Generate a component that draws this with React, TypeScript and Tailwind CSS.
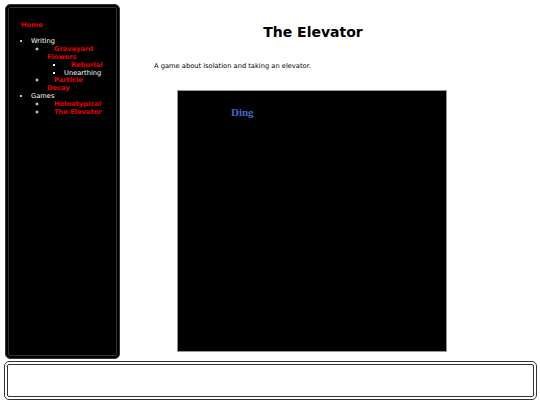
import React from 'react';

const writing = [
  { label: 'Graveyard Flowers', link: true, children: [
    { label: 'Reburial', link: true },
    { label: 'Unearthing', link: false },
  ] },
  { label: 'Particle Decay', link: true },
];

const games = [
  { label: 'Holoatypical', link: true },
  { label: 'The Elevator', link: true },
];

function Item({ label, link }: { label: string; link: boolean }) {
  if (!link) return <span className="text-white">{label}</span>;
  return <a className="pl-[7px] font-bold text-[#e00000]">{label}</a>;
}

export default function App() {
  return (
    <div className="w-[540px] h-[405px] bg-white p-[4px] font-['DejaVu_Sans',sans-serif] overflow-hidden">
      <div className="flex h-[355px]">
        {/* Sidebar */}
        <nav className="w-[115px] h-[355px] ml-[1px] bg-black border-[4px] border-double border-[#333] rounded-[5px] px-[12px] pt-[14px] text-[6.7px] leading-[7.9px] text-white">
          <a className="font-bold text-[#e00000]">Home</a>
          <ul className="mt-[8px] pl-[10px] [list-style-type:disc]">
            <li>
              Writing
              <ul className="pl-[16px] [list-style-type:circle]">
                {writing.map(w => (
                  <li key={w.label}>
                    <Item label={w.label} link={w.link} />
                    {w.children && (
                      <ul className="pl-[17px] [list-style-type:square]">
                        {w.children.map(c => (
                          <li key={c.label}><Item label={c.label} link={c.link} /></li>
                        ))}
                      </ul>
                    )}
                  </li>
                ))}
              </ul>
            </li>
            <li>
              Games
              <ul className="pl-[16px] [list-style-type:circle]">
                {games.map(g => (
                  <li key={g.label}><Item label={g.label} link={g.link} /></li>
                ))}
              </ul>
            </li>
          </ul>
        </nav>

        {/* Main */}
        <main className="flex-1 pl-[34px] pr-[64px]">
          <h1 className="mt-[18px] text-center text-[14px] leading-[20px] font-bold text-black">The Elevator</h1>
          <p className="mt-[20px] text-[6.7px] leading-[9px] text-black">A game about isolation and taking an elevator.</p>
          <div className="mt-[19px] ml-[23px] w-[270px] h-[262px] bg-black border border-[#999]">
            <div className="ml-[53px] mt-[13px] font-['Liberation_Serif',serif] font-bold text-[11px] text-[#4466cc]">Ding</div>
          </div>
        </main>
      </div>

      {/* Footer */}
      <footer className="mt-[2px] h-[39px] w-[533px] border-[4px] border-double border-[#333] rounded-[5px] bg-white" />
    </div>
  );
}
